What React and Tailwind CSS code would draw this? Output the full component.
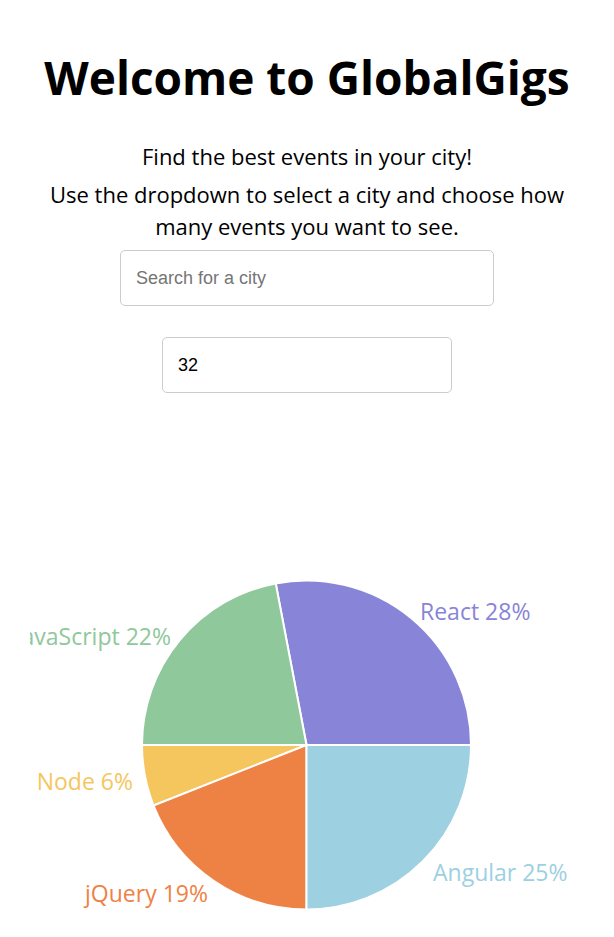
import { useState } from 'react';

// pie is drawn in a box that starts at x=30 on the page, so labels past its left edge are cut off
const slices = [
  { name: 'React', pct: 28, color: '#8884d8', d: 'M276.5 205 L441 205 A164.5 164.5 0 0 0 245.7 43.4 Z' },
  { name: 'JavaScript', pct: 22, color: '#8fc89a', d: 'M276.5 205 L245.7 43.4 A164.5 164.5 0 0 0 112 205 Z' },
  { name: 'Node', pct: 6, color: '#f5c65e', d: 'M276.5 205 L112 205 A164.5 164.5 0 0 0 123.55 265.55 Z' },
  { name: 'jQuery', pct: 19, color: '#ee8245', d: 'M276.5 205 L123.55 265.55 A164.5 164.5 0 0 0 276.5 369.5 Z' },
  { name: 'Angular', pct: 25, color: '#9dd0e1', d: 'M276.5 205 L276.5 369.5 A164.5 164.5 0 0 0 441 205 Z' },
];

const labels = [
  { i: 0, x: 390, y: 71, anchor: 'start' },
  { i: 1, x: 141, y: 96, anchor: 'end' },
  { i: 2, x: 103, y: 241, anchor: 'end' },
  { i: 3, x: 178, y: 353, anchor: 'end' },
  { i: 4, x: 403, y: 332, anchor: 'start' },
];

export default function App() {
  const [city, setCity] = useState('');
  const [count, setCount] = useState('32');

  return (
    <div className="flex flex-col items-center text-center text-black font-['Open_Sans','Noto_Sans',sans-serif]">
      <h1 className="mt-[50px] text-[46px] leading-[54px] font-bold">Welcome to GlobalGigs</h1>
      <p className="mt-[36px] text-[22px] leading-[32px]">Find the best events in your city!</p>
      <p className="mt-[6px] max-w-[560px] text-[22px] leading-[32px]">Use the dropdown to select a city and choose how many events you want to see.</p>

      <input value={city} onChange={e => setCity(e.target.value)} placeholder="Search for a city"
        className="mt-[8px] w-[374px] h-[56px] px-[15px] border border-[#cccccc] rounded-[5px] text-[18px] font-['Liberation_Sans',Arial,sans-serif] placeholder:text-[#757575] outline-none" />
      <input value={count} onChange={e => setCount(e.target.value)} type="text"
        className="mt-[31px] w-[290px] h-[56px] px-[15px] border border-[#cccccc] rounded-[5px] text-[18px] font-['Liberation_Sans',Arial,sans-serif] outline-none" />

      <div className="mt-[147px] w-[554px] h-[397px] overflow-hidden">
        <svg width="554" height="397" viewBox="0 0 554 397">
          {slices.map(s => (
            <path key={s.name} d={s.d} fill={s.color} stroke="#ffffff" strokeWidth="2" />
          ))}
          {labels.map(l => (
            <text key={l.i} x={l.x} y={l.y} textAnchor={l.anchor} dominantBaseline="central"
              fill={slices[l.i].color} fontSize="23">
              {slices[l.i].name} {slices[l.i].pct}%
            </text>
          ))}
        </svg>
      </div>
    </div>
  );
}
